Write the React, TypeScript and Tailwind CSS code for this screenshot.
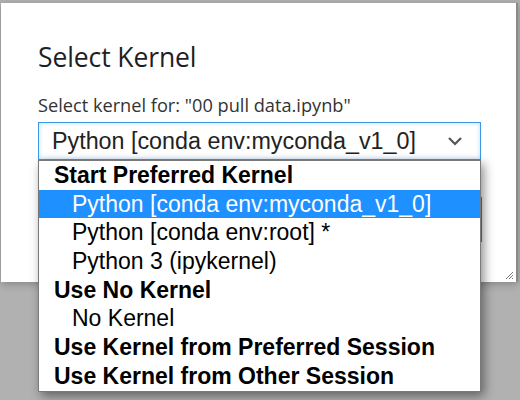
import React from "react";

const rows: { text: string; kind: "group" | "opt" | "sel" }[] = [
  { text: "Start Preferred Kernel", kind: "group" },
  { text: "Python [conda env:myconda_v1_0]", kind: "sel" },
  { text: "Python [conda env:root] *", kind: "opt" },
  { text: "Python 3 (ipykernel)", kind: "opt" },
  { text: "Use No Kernel", kind: "group" },
  { text: "No Kernel", kind: "opt" },
  { text: "Use Kernel from Preferred Session", kind: "group" },
  { text: "Use Kernel from Other Session", kind: "group" },
];

export default function App() {
  return (
    <div className="w-[520px] h-[400px] bg-[#b1b1b1] overflow-hidden pt-[3px] pl-[1px]">
      <div className="relative w-[517px] h-[279px] bg-white border-r-2 border-[#8a8a8a] shadow-[0_2px_8px_rgba(0,0,0,0.25)] pl-[37px] pr-[35px] pt-[37px] flex flex-col [font-family:'Open_Sans',sans-serif]">
        <div className="text-[26.5px] leading-[35px] text-[#1f1f1f] tracking-[-0.1px]">Select Kernel</div>
        <div className="mt-[19px] text-[18.2px] leading-[23px] text-[#333]">Select kernel for: "00 pull data.ipynb"</div>
        <div className="relative mt-[5px]">
          <div className="h-[38px] border border-[#3a98e6] shadow-[inset_0_0_4px_rgba(58,152,230,0.35)] flex items-center pl-[13px] pr-[16px] [font-family:'Liberation_Sans',Arial,sans-serif] text-[23.3px] text-[#222]">
            <span className="flex-1">Python [conda env:myconda_v1_0]</span>
            <svg width="16" height="10" viewBox="0 0 16 10" className="mr-[1px]">
              <path d="M2 2 L8 8 L14 2" fill="none" stroke="#555" strokeWidth="2.2" />
            </svg>
          </div>
          <div className="absolute left-0 right-0 top-[38px] z-10 bg-white border border-[#7a7a7a] shadow-[3px_4px_10px_rgba(0,0,0,0.45)] [font-family:'Liberation_Sans',Arial,sans-serif] text-[23px]">
            {rows.map((r, i) => (
              <div
                key={i}
                className={
                  r.kind === "group"
                    ? "h-[28.7px] leading-[28.7px] pl-[15px] font-bold text-black whitespace-nowrap"
                    : r.kind === "sel"
                    ? "h-[28.7px] leading-[28.7px] pl-[33px] bg-[#1e90ff] text-white whitespace-nowrap"
                    : "h-[28.7px] leading-[28.7px] pl-[33px] text-black whitespace-nowrap"
                }
              >
                {r.text}
              </div>
            ))}
          </div>
        </div>
        <div className="mt-[37px] flex justify-end mr-[-1px]">
          <div className="h-[45px] w-[110px] bg-[#1e90ff]" />
        </div>
        <svg width="9" height="9" viewBox="0 0 9 9" className="absolute right-[2px] bottom-[2px]">
          <path d="M8 1 L1 8 M8 4 L4 8 M8 7 L7 8" stroke="#777" strokeWidth="1" />
        </svg>
      </div>
    </div>
  );
}
